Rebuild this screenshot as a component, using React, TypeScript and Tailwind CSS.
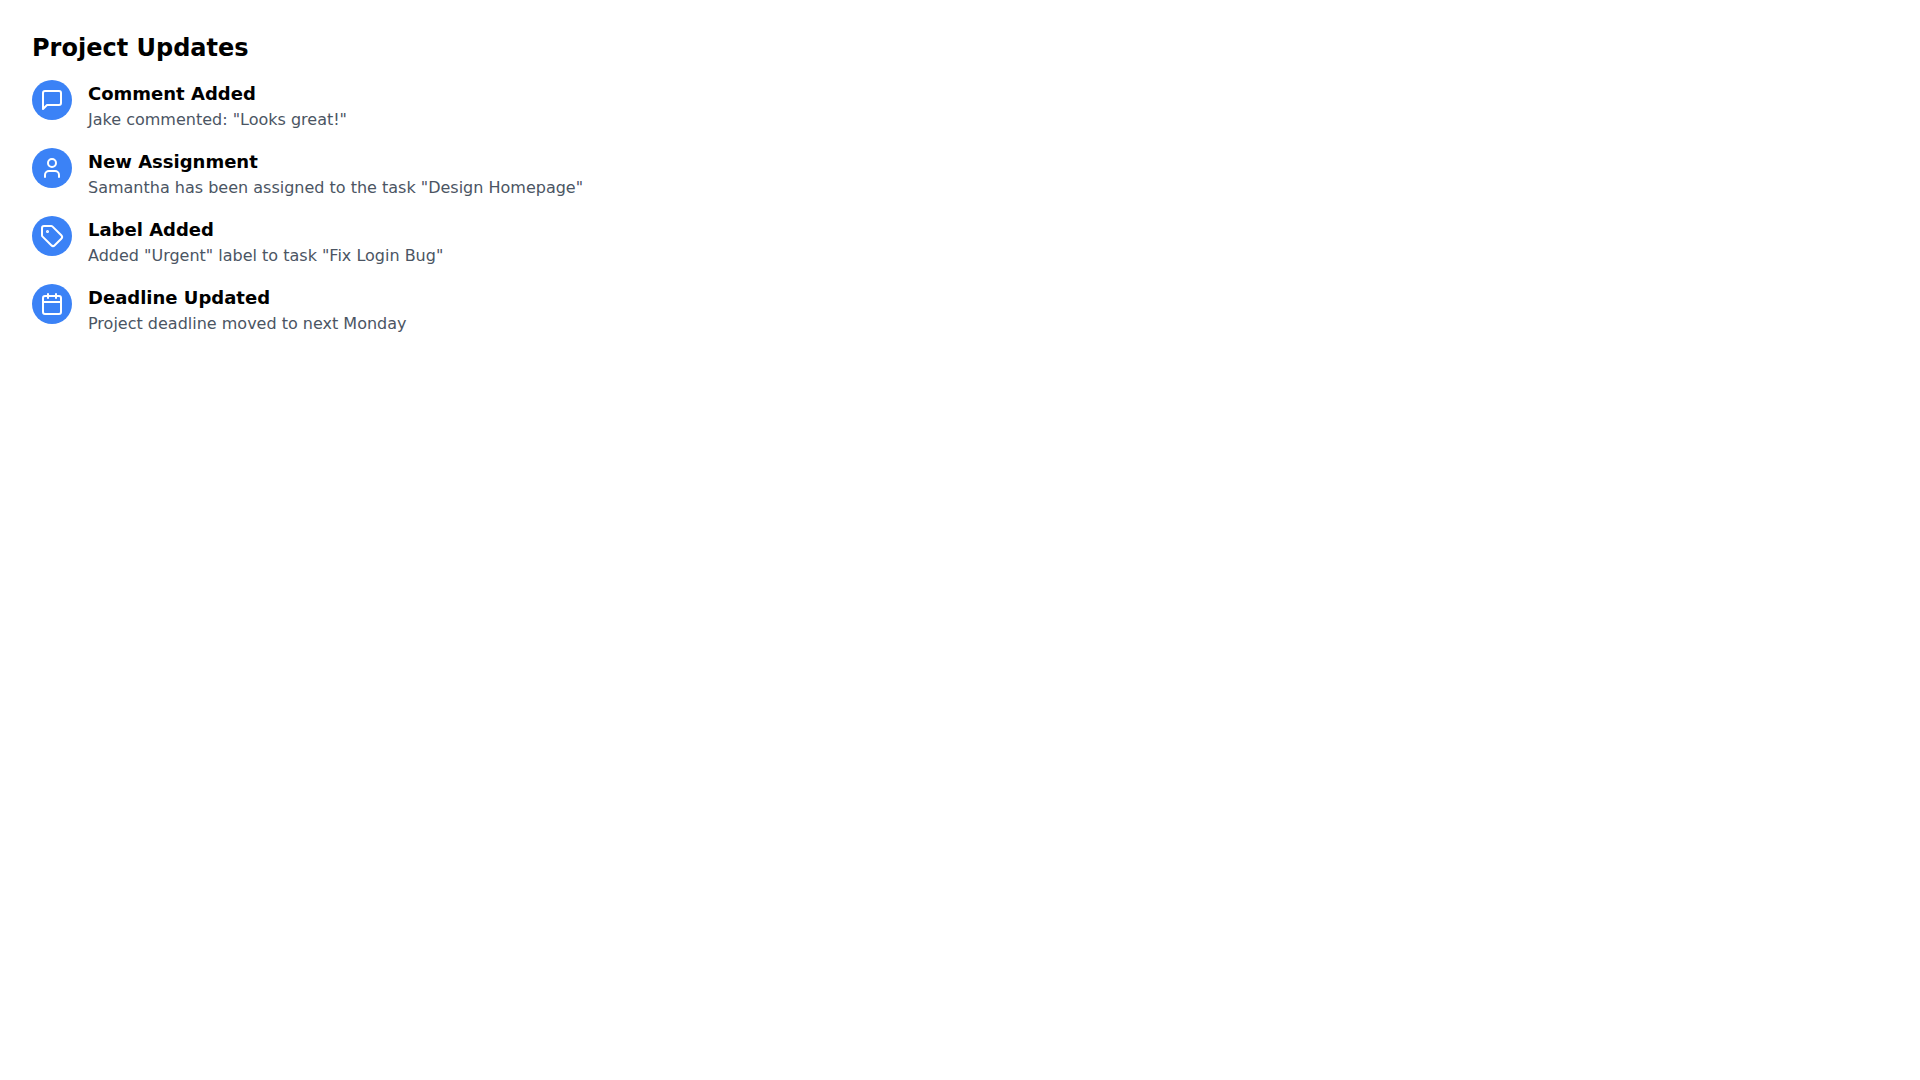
import { Calendar, Tag, User } from "lucide-react";
import { FiMessageSquare } from "react-icons/fi";

const updates = [
  { icon: FiMessageSquare, title: "Comment Added", text: 'Jake commented: "Looks great!"' },
  { icon: User, title: "New Assignment", text: 'Samantha has been assigned to the task "Design Homepage"' },
  { icon: Tag, title: "Label Added", text: 'Added "Urgent" label to task "Fix Login Bug"' },
  { icon: Calendar, title: "Deadline Updated", text: "Project deadline moved to next Monday" },
];

export default function App() {
  return (
    <main className="p-8 font-['DejaVu_Sans',sans-serif] text-black">
      <h1 className="mb-4 text-2xl font-bold">Project Updates</h1>
      <ul className="flex flex-col gap-4">
        {updates.map(({ icon: Icon, title, text }) => (
          <li key={title} className="flex items-start gap-4">
            <span className="flex size-10 shrink-0 items-center justify-center rounded-full bg-[#3b82f6] text-white">
              <Icon className="size-6" aria-hidden="true" />
            </span>
            <div>
              <h2 className="text-lg font-semibold">{title}</h2>
              <p className="text-base text-[#4b5563]">{text}</p>
            </div>
          </li>
        ))}
      </ul>
    </main>
  );
}
